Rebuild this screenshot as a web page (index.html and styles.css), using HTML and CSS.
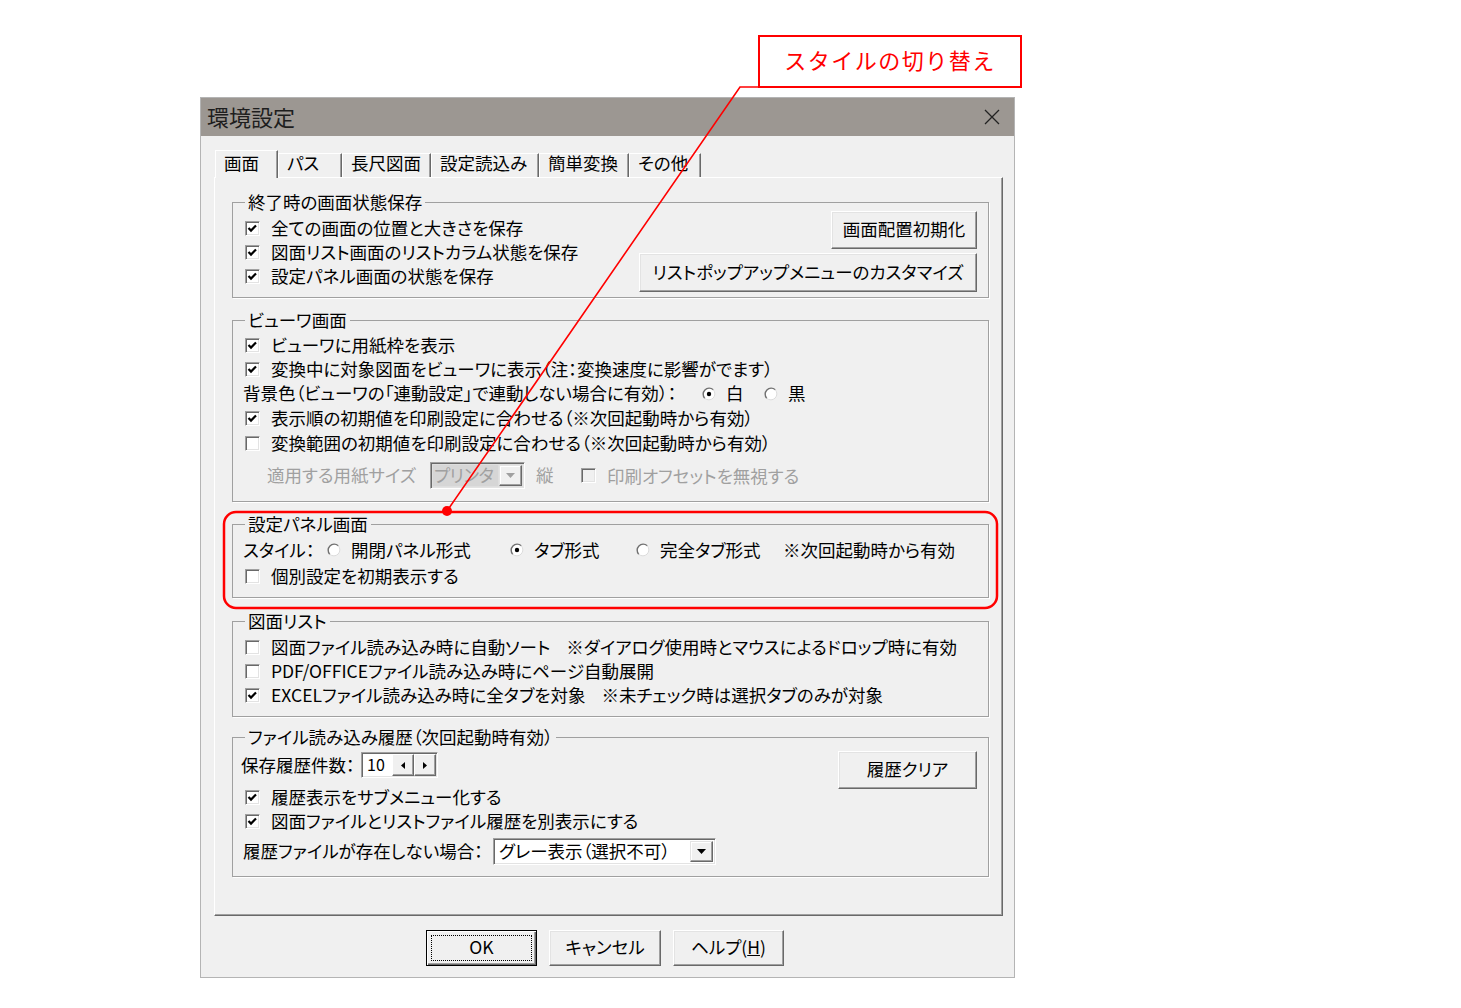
FILE: index.html
```html
<!DOCTYPE html>
<html lang="ja">
<head>
    <meta charset="UTF-8">
    <meta name="viewport" content="width=device-width, initial-scale=1.0">
    <title>環境設定</title>
    <link rel="stylesheet" href="styles.css">
</head>
<body>
    <div class="callout">スタイルの切り替え</div>

    <div class="dialog">
        <div class="titlebar">
            <span class="title">環境設定</span>
            <svg class="close" width="16" height="16" viewBox="0 0 16 16"><path d="M1 1L15 15M15 1L1 15" stroke="#222" stroke-width="1.3"/></svg>
        </div>

        <div class="dialog-body">
            <div class="tabs">
                <div class="tab active">画面</div>
                <div class="tab">パス</div>
                <div class="tab">長尺図面</div>
                <div class="tab">設定読込み</div>
                <div class="tab">簡単変換</div>
                <div class="tab">その他</div>
            </div>

            <div class="panel">
                <!-- 終了時 -->
                <fieldset class="group g-exit">
                    <legend>終了時の画面状態保存</legend>
                    <div class="split">
                        <div class="rows">
                            <label class="row"><span class="box"><svg width="13" height="13" viewBox="0 0 13 13"><path d="M2.5 6l2.5 2.6L10 3.5" fill="none" stroke="#000" stroke-width="2.2"/></svg></span>全ての画面の位置と大きさを保存</label>
                            <label class="row"><span class="box"><svg width="13" height="13" viewBox="0 0 13 13"><path d="M2.5 6l2.5 2.6L10 3.5" fill="none" stroke="#000" stroke-width="2.2"/></svg></span>図面リスト画面のリストカラム状態を保存</label>
                            <label class="row"><span class="box"><svg width="13" height="13" viewBox="0 0 13 13"><path d="M2.5 6l2.5 2.6L10 3.5" fill="none" stroke="#000" stroke-width="2.2"/></svg></span>設定パネル画面の状態を保存</label>
                        </div>
                        <div class="btn-col">
                            <button class="btn btn-reset">画面配置初期化</button>
                            <button class="btn btn-custom">リストポップアップメニューのカスタマイズ</button>
                        </div>
                    </div>
                </fieldset>

                <!-- ビューワ -->
                <fieldset class="group g-viewer">
                    <legend>ビューワ画面</legend>
                    <label class="row"><span class="box"><svg width="13" height="13" viewBox="0 0 13 13"><path d="M2.5 6l2.5 2.6L10 3.5" fill="none" stroke="#000" stroke-width="2.2"/></svg></span>ビューワに用紙枠を表示</label>
                    <label class="row"><span class="box"><svg width="13" height="13" viewBox="0 0 13 13"><path d="M2.5 6l2.5 2.6L10 3.5" fill="none" stroke="#000" stroke-width="2.2"/></svg></span>変換中に対象図面をビューワに表示（注：変換速度に影響がでます）</label>
                    <div class="row row-25">
                        <span class="bg-label">背景色（ビューワの「連動設定」で連動しない場合に有効）：</span>
                        <span class="opt opt-white"><svg class="radio" width="14" height="14" viewBox="0 0 14 14"><circle cx="7" cy="7" r="6" fill="#fff"/><path d="M2.76 11.24A6 6 0 0 1 11.24 2.76" fill="none" stroke="#707070" stroke-width="1.4"/><path d="M11.24 2.76A6 6 0 0 1 2.76 11.24" fill="none" stroke="#dcdcdc" stroke-width="1"/><circle cx="7" cy="7" r="2.2" fill="#000"/></svg>白</span>
                        <span class="opt"><svg class="radio" width="14" height="14" viewBox="0 0 14 14"><circle cx="7" cy="7" r="6" fill="#fff"/><path d="M2.76 11.24A6 6 0 0 1 11.24 2.76" fill="none" stroke="#707070" stroke-width="1.4"/><path d="M11.24 2.76A6 6 0 0 1 2.76 11.24" fill="none" stroke="#dcdcdc" stroke-width="1"/></svg>黒</span>
                    </div>
                    <label class="row row-25"><span class="box"><svg width="13" height="13" viewBox="0 0 13 13"><path d="M2.5 6l2.5 2.6L10 3.5" fill="none" stroke="#000" stroke-width="2.2"/></svg></span>表示順の初期値を印刷設定に合わせる（※次回起動時から有効）</label>
                    <label class="row row-25"><span class="box"></span>変換範囲の初期値を印刷設定に合わせる（※次回起動時から有効）</label>
                    <div class="row paper-row disabled">
                        <span class="paper-label">適用する用紙サイズ</span>
                        <span class="combo combo-paper"><span class="combo-text">プリンタ</span><span class="drop"><svg width="9" height="5" viewBox="0 0 9 5"><path d="M0 0H9L4.5 5Z" fill="#a0a0a0"/></svg></span></span>
                        <span class="tate">縦</span>
                        <span class="box box-off"></span>印刷オフセットを無視する
                    </div>
                </fieldset>

                <!-- 設定パネル -->
                <fieldset class="group g-panel">
                    <legend>設定パネル画面</legend>
                    <div class="row row-26">
                        <span class="style-label">スタイル：</span>
                        <span class="opt opt-style1"><svg class="radio" width="14" height="14" viewBox="0 0 14 14"><circle cx="7" cy="7" r="6" fill="#fff"/><path d="M2.76 11.24A6 6 0 0 1 11.24 2.76" fill="none" stroke="#707070" stroke-width="1.4"/><path d="M11.24 2.76A6 6 0 0 1 2.76 11.24" fill="none" stroke="#dcdcdc" stroke-width="1"/></svg>開閉パネル形式</span>
                        <span class="opt opt-style2"><svg class="radio" width="14" height="14" viewBox="0 0 14 14"><circle cx="7" cy="7" r="6" fill="#fff"/><path d="M2.76 11.24A6 6 0 0 1 11.24 2.76" fill="none" stroke="#707070" stroke-width="1.4"/><path d="M11.24 2.76A6 6 0 0 1 2.76 11.24" fill="none" stroke="#dcdcdc" stroke-width="1"/><circle cx="7" cy="7" r="2.2" fill="#000"/></svg>タブ形式</span>
                        <span class="opt opt-style3"><svg class="radio" width="14" height="14" viewBox="0 0 14 14"><circle cx="7" cy="7" r="6" fill="#fff"/><path d="M2.76 11.24A6 6 0 0 1 11.24 2.76" fill="none" stroke="#707070" stroke-width="1.4"/><path d="M11.24 2.76A6 6 0 0 1 2.76 11.24" fill="none" stroke="#dcdcdc" stroke-width="1"/></svg>完全タブ形式</span>
                        <span>※次回起動時から有効</span>
                    </div>
                    <label class="row row-26"><span class="box"></span>個別設定を初期表示する</label>
                </fieldset>

                <!-- 図面リスト -->
                <fieldset class="group g-list">
                    <legend>図面リスト</legend>
                    <label class="row"><span class="box"></span>図面ファイル読み込み時に自動ソート<span class="note">※ダイアログ使用時とマウスによるドロップ時に有効</span></label>
                    <label class="row"><span class="box"></span>PDF/OFFICEファイル読み込み時にページ自動展開</label>
                    <label class="row"><span class="box"><svg width="13" height="13" viewBox="0 0 13 13"><path d="M2.5 6l2.5 2.6L10 3.5" fill="none" stroke="#000" stroke-width="2.2"/></svg></span>EXCELファイル読み込み時に全タブを対象<span class="note">※未チェック時は選択タブのみが対象</span></label>
                </fieldset>

                <!-- 履歴 -->
                <fieldset class="group g-history">
                    <legend>ファイル読み込み履歴（次回起動時有効）</legend>
                    <div class="split">
                        <div class="rows">
                            <div class="row row-26">
                                <span class="count-label">保存履歴件数：</span>
                                <span class="spin">
                                    <span class="spin-value">10</span>
                                    <span class="spin-btn"><svg width="4" height="7" viewBox="0 0 4 7"><path d="M4 0V7L0 3.5Z" fill="#000"/></svg></span>
                                    <span class="spin-btn"><svg width="4" height="7" viewBox="0 0 4 7"><path d="M0 0V7L4 3.5Z" fill="#000"/></svg></span>
                                </span>
                            </div>
                            <label class="row row-first"><span class="box"><svg width="13" height="13" viewBox="0 0 13 13"><path d="M2.5 6l2.5 2.6L10 3.5" fill="none" stroke="#000" stroke-width="2.2"/></svg></span>履歴表示をサブメニュー化する</label>
                            <label class="row"><span class="box"><svg width="13" height="13" viewBox="0 0 13 13"><path d="M2.5 6l2.5 2.6L10 3.5" fill="none" stroke="#000" stroke-width="2.2"/></svg></span>図面ファイルとリストファイル履歴を別表示にする</label>
                            <div class="row row-26 combo-row">
                                <span class="missing-label">履歴ファイルが存在しない場合：</span>
                                <span class="combo combo-missing"><span class="combo-text">グレー表示（選択不可）</span><span class="drop"><svg width="9" height="5" viewBox="0 0 9 5"><path d="M0 0H9L4.5 5Z" fill="#000"/></svg></span></span>
                            </div>
                        </div>
                        <div class="btn-col btn-col-history">
                            <button class="btn btn-clear">履歴クリア</button>
                        </div>
                    </div>
                </fieldset>
            </div>

            <div class="actions">
                <button class="btn btn-dialog btn-default">OK</button>
                <button class="btn btn-dialog btn-cancel">キャンセル</button>
                <button class="btn btn-dialog">ヘルプ(<u>H</u>)</button>
            </div>
        </div>
    </div>

    <svg class="annotations" width="1461" height="1008" viewBox="0 0 1461 1008">
        <rect x="224" y="512" width="773" height="96" rx="12" fill="none" stroke="#f00" stroke-width="2.5"/>
        <polyline points="758,87 740,87 447,511" fill="none" stroke="#f00" stroke-width="1.6"/>
        <circle cx="447" cy="511" r="5" fill="#f00"/>
    </svg>
</body>
</html>
```

FILE: styles.css
```css
body {
    margin: 0;
    background-color: white;
    color: black;
    font-family: "Noto Sans CJK JP", sans-serif;
}

/* 注釈 */
.callout {
    margin: 35px 0 0 758px;
    width: 264px;
    height: 53px;
    box-sizing: border-box;
    border: 2px solid #ff0000;
    padding-bottom: 5px;
    background-color: white;
    color: #ff0000;
    font-size: 22px;
    letter-spacing: 1.5px;
    display: flex;
    align-items: center;
    justify-content: center;
}

.annotations {
    position: absolute;
    left: 0;
    top: 0;
    pointer-events: none;
}

/* ダイアログ */
.dialog {
    margin: 9px 0 0 200px;
    width: 815px;
    box-sizing: border-box;
    border: 1px solid #b4b4b4;
    background-color: #f0f0f0;
    font-size: 17.5px;
    font-feature-settings: "palt";
}

.titlebar {
    height: 38px;
    box-sizing: border-box;
    padding: 0 14px 3px 6px;
    background-color: #9c9792;
    display: flex;
    align-items: center;
    justify-content: space-between;
}

.title {
    font-size: 22px;
    font-feature-settings: normal;
    color: #1e1e1e;
}

.close { margin-top: 3px; }

.dialog-body {
    padding: 14px 10px 11px 13px;
}

/* タブ */
.tabs {
    display: flex;
    align-items: flex-end;
    padding-left: 1px;
    height: 27px;
}

.tab {
    height: 24px;
    box-sizing: border-box;
    padding-left: 8px;
    line-height: 18px;
    border-top: 1px solid white;
    border-left: 1px solid white;
    border-right: 1px solid #696969;
    box-shadow: inset -1px 0 0 #a0a0a0;
    white-space: nowrap;
}

.tab:nth-child(1) { width: 63px; }
.tab:nth-child(2) { width: 64px; }
.tab:nth-child(3) { width: 89px; }
.tab:nth-child(4) { width: 108px; }
.tab:nth-child(5) { width: 90px; }
.tab:nth-child(6) { width: 72px; }

.tab.active {
    height: 28px;
    padding-top: 3px;
    margin-bottom: -1px;
    position: relative;
    z-index: 1;
    background-color: #f0f0f0;
}

.panel {
    width: 789px;
    box-sizing: border-box;
    border-top: 1px solid white;
    border-left: 1px solid white;
    border-right: 1px solid #696969;
    border-bottom: 1px solid #696969;
    box-shadow: inset -1px -1px 0 #a0a0a0;
    padding: 14px 13px 38px 17px;
}

/* グループ */
.group {
    margin: 0;
    padding: 0 11px 8px 12px;
    border: 1px solid #a0a0a0;
    box-shadow: 1px 1px 0 white;
    min-width: 0;
}

.group legend {
    padding: 0 3px 1px;
    line-height: 19px;
}

.g-exit { padding-bottom: 5px; }
.g-exit .rows { padding-top: 4px; }

.g-viewer { margin-top: 12px; padding-top: 3px; padding-bottom: 13px; }
.g-panel { margin-top: 12px; padding-top: 3px; padding-bottom: 8px; }
.g-list { margin-top: 13px; padding-top: 4px; padding-bottom: 9px; }
.g-history { margin-top: 10px; padding-bottom: 12px; }
.g-history .rows { padding-top: 5px; }

.split {
    display: flex;
    justify-content: space-between;
    align-items: flex-start;
}

.btn-col {
    display: flex;
    flex-direction: column;
    align-items: flex-end;
    gap: 4px;
    margin-top: -1px;
}

.btn-col-history { margin-top: 4px; }

.row {
    display: flex;
    align-items: center;
    height: 24px;
    box-sizing: border-box;
    padding-bottom: 2px;
    white-space: nowrap;
}

.row-25 { height: 25px; }
.row-26 { height: 26px; }
.row-first { margin-top: 7px; }
.combo-row { margin-top: 5px; padding-bottom: 0; }

/* チェックボックス */
.box {
    width: 13px;
    height: 13px;
    flex: none;
    background-color: white;
    border-top: 1px solid #a0a0a0;
    border-left: 1px solid #a0a0a0;
    border-bottom: 1px solid white;
    border-right: 1px solid white;
    box-shadow: inset 1px 1px 0 #696969, inset -1px -1px 0 #e3e3e3;
    margin: 2px 11px 0 0;
    display: flex;
}

.box svg { display: block; }

.box-off {
    background-color: #f0f0f0;
}

/* ラジオ */
.opt {
    display: flex;
    align-items: center;
}

.radio {
    flex: none;
    margin: 2px 10px 0 0;
}

.bg-label {
    margin-left: -2px;
    width: 459px;
}

.opt-white { width: 62px; }

.style-label {
    margin-left: -2px;
    width: 84px;
}

.opt-style1 { width: 183px; }
.opt-style2 { width: 126px; }
.opt-style3 { width: 147px; }

.note { margin-left: 16px; }

/* 用紙サイズ */
.paper-row {
    height: 26px;
    margin-top: 6px;
    padding-bottom: 0;
}

.disabled { color: #a0a0a0; }

.paper-label {
    margin-left: 22px;
    width: 163px;
    padding-bottom: 2px;
}

.tate { width: 45px; margin-left: 11px; padding-bottom: 2px; }

.paper-row .box { margin-top: 0; }

/* コンボ */
.combo {
    display: flex;
    align-items: center;
    box-sizing: border-box;
    height: 27px;
    border-top: 1px solid #a0a0a0;
    border-left: 1px solid #a0a0a0;
    border-bottom: 1px solid white;
    border-right: 1px solid white;
    box-shadow: inset 1px 1px 0 #696969, inset -1px -1px 0 #e3e3e3;
    padding: 2px;
    background-color: white;
}

.combo-text {
    flex: 1;
    padding: 0 0 2px 3px;
    height: 21px;
    box-sizing: border-box;
    line-height: 19px;
    white-space: nowrap;
}

.combo-paper {
    width: 95px;
    background-color: #dedede;
}

.combo-paper .combo-text {
    background-color: #d6d6d6;
    padding-left: 1px;
    margin-right: 1px;
    letter-spacing: -0.5px;
}

.combo-missing { width: 223px; }

.drop {
    width: 23px;
    height: 21px;
    flex: none;
    box-sizing: border-box;
    background-color: #f0f0f0;
    border-top: 1px solid #e3e3e3;
    border-left: 1px solid #e3e3e3;
    border-right: 1px solid #696969;
    border-bottom: 1px solid #696969;
    box-shadow: inset -1px -1px 0 #a0a0a0, inset 1px 1px 0 white;
    display: flex;
    align-items: center;
    justify-content: center;
}

.missing-label {
    margin-left: -2px;
    width: 250px;
    padding-bottom: 2px;
}

/* スピン */
.count-label {
    margin-left: -4px;
    width: 120px;
}

.spin {
    display: flex;
    align-items: center;
    width: 77px;
    height: 26px;
    box-sizing: border-box;
    border-top: 1px solid #a0a0a0;
    border-left: 1px solid #a0a0a0;
    border-bottom: 1px solid white;
    border-right: 1px solid white;
    box-shadow: inset 1px 1px 0 #696969, inset -1px -1px 0 #e3e3e3;
    padding: 2px 1px 2px 2px;
    margin-top: 2px;
    background-color: white;
}

.spin-value {
    flex: 1;
    padding: 0 0 2px 3px;
    font-size: 16px;
    line-height: 18px;
}

.spin-btn {
    width: 22px;
    height: 22px;
    box-sizing: border-box;
    background-color: #f0f0f0;
    border-top: 1px solid white;
    border-left: 1px solid white;
    border-right: 1px solid #696969;
    border-bottom: 1px solid #696969;
    box-shadow: inset -1px -1px 0 #a0a0a0;
    display: flex;
    align-items: center;
    justify-content: center;
}

/* ボタン */
.btn {
    font-family: inherit;
    font-size: 17.5px;
    font-feature-settings: "palt";
    color: black;
    background-color: #f0f0f0;
    border-top: 1px solid white;
    border-left: 1px solid white;
    border-right: 1px solid #696969;
    border-bottom: 1px solid #696969;
    box-shadow: inset -1px -1px 0 #a0a0a0, inset 1px 1px 0 #e3e3e3;
    padding: 0 0 3px;
    display: flex;
    align-items: center;
    justify-content: center;
    white-space: nowrap;
}

.btn-reset { width: 146px; height: 38px; }
.btn-custom { width: 338px; height: 39px; }
.btn-clear { width: 139px; height: 38px; }

.actions {
    display: flex;
    gap: 12px;
    margin-top: 14px;
    padding-left: 212px;
}

.btn-dialog {
    width: 111px;
    height: 36px;
}

.btn-cancel { width: 112px; }

.btn-default {
    position: relative;
    border: 1px solid black;
    box-shadow: inset 1px 1px 0 white, inset -1px -1px 0 #696969, inset -2px -2px 0 #a0a0a0;
}

.btn-default::after {
    content: "";
    position: absolute;
    left: 4px;
    top: 4px;
    right: 4px;
    bottom: 4px;
    border: 1px dotted black;
}
```
